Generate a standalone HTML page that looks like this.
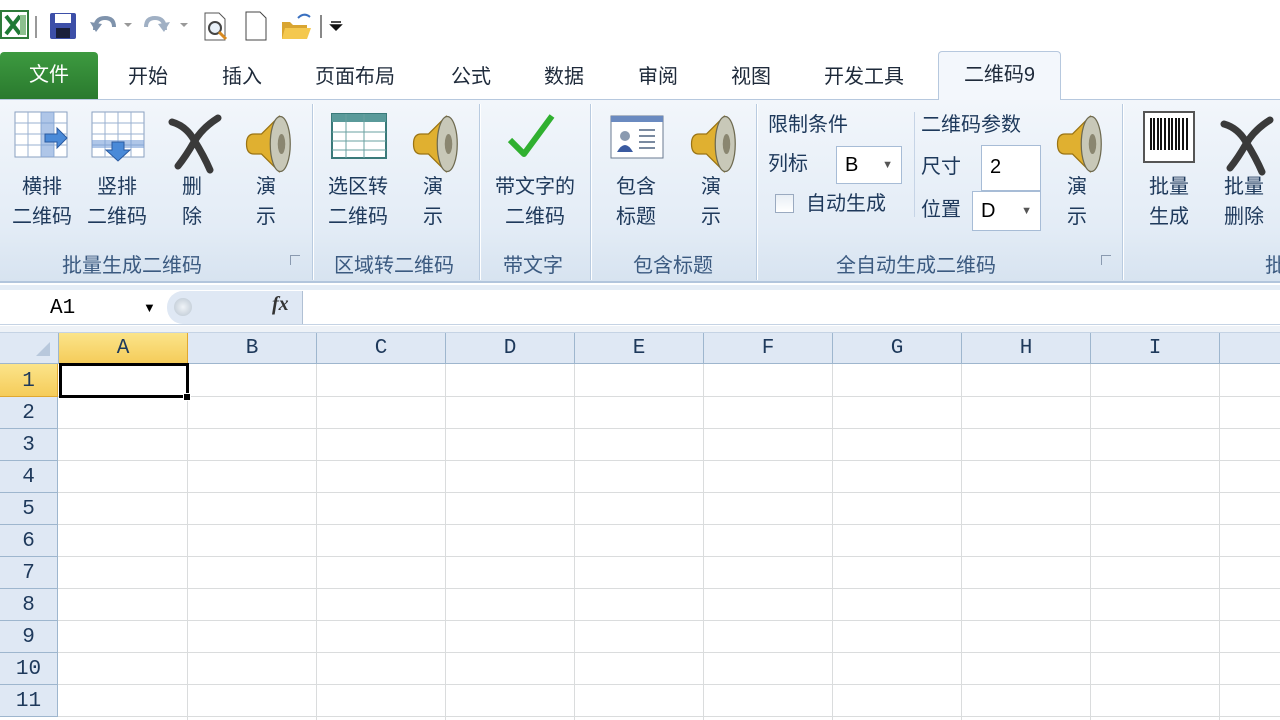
<!DOCTYPE html>
<html><head><meta charset="utf-8"><style>
*{margin:0;padding:0;box-sizing:border-box}
body{width:1280px;height:720px;overflow:hidden;background:#fff;position:relative;font-family:"Liberation Sans","Noto Sans CJK SC",sans-serif;color:#1e395b}
.a{position:absolute}
.tab{position:absolute;top:60px;font-size:20px;color:#1e2a3a}
.lbl{position:absolute;font-size:20px;color:#1e395b;text-align:center;line-height:30px;white-space:nowrap}
.gl{position:absolute;top:249px;font-size:20px;color:#3b5a80;white-space:nowrap}
.sep{position:absolute;top:104px;width:2px;height:176px;background:linear-gradient(#f6f9fd,#c6d4e6,#f6f9fd);border-left:1px solid #b9cbe0;border-right:1px solid #fff}
.ch{position:absolute;top:333px;height:31px;background:#dfe8f4;border-right:1px solid #9eb6ce;border-bottom:1px solid #9eb6ce;font-family:"Liberation Mono",monospace;font-size:21px;text-align:center;line-height:32px;color:#1e395b}
.rh{position:absolute;left:0;width:58px;background:#dfe8f4;border-bottom:1px solid #9eb6ce;border-right:1px solid #9eb6ce;font-family:"Liberation Mono",monospace;font-size:21px;text-align:center;color:#1e395b;padding-top:2px}
.vl{position:absolute;top:364px;width:1px;height:356px;background:#dadcdd}
.hl{position:absolute;left:58px;width:1222px;height:1px;background:#dadcdd}
.box{position:absolute;background:#fff;border:1px solid #a7bcd6;font-size:20px;color:#000;padding-left:8px}
</style></head><body>
<svg class="a" style="left:0;top:8px" width="350" height="36">
<rect x="1" y="3" width="27" height="27" fill="#fff" stroke="#2f7a3a" stroke-width="2"/><path d="M6 8 L20 26 M20 8 L6 26" stroke="#1f7a35" stroke-width="4"/><rect x="20" y="7" width="6" height="20" fill="#8cc08e"/>
<rect x="35" y="8" width="2" height="22" fill="#999"/>
<rect x="50" y="5" width="26" height="26" fill="#3d4fa8" rx="2"/><rect x="55" y="6" width="16" height="9" fill="#fff"/><rect x="56" y="20" width="14" height="10" fill="#1a1f3a"/>
<path d="M95 22 q0 -12 10 -12 q9 0 9 9" stroke="#7f93ac" stroke-width="4" fill="none"/><path d="M90 14 l6 10 l6-8z" fill="#7f93ac"/>
<path d="M124 15 l8 0 l-4 4z" fill="#999"/>
<path d="M165 22 q0 -12 -10 -12 q-9 0 -9 9" stroke="#a0b0c4" stroke-width="4" fill="none"/><path d="M170 14 l-6 10 l-6-8z" fill="#a0b0c4"/>
<path d="M180 15 l8 0 l-4 4z" fill="#999"/>
<path d="M205 5 h14 l6 6 v21 h-20z" fill="#fff" stroke="#555"/><circle cx="215" cy="20" r="6" fill="#e8f0f8" stroke="#444" stroke-width="2"/><path d="M219 24 l7 7" stroke="#d88a20" stroke-width="3"/>
<path d="M246 4 h14 l6 6 v22 h-20z" fill="#fff" stroke="#444"/>
<path d="M282 14 h8 l3 3 h14 v14 h-25z" fill="#d9a531"/><path d="M285 20 h26 l-4 11 h-25z" fill="#f4c84e"/><path d="M298 10 q6 -6 12 -1" stroke="#3a70c0" stroke-width="2" fill="none"/>
<rect x="320" y="7" width="2" height="23" fill="#888"/>
<path d="M331 14 h10 M331 17 h10 l-5 5z" stroke="#111" stroke-width="1.5" fill="#111"/>
</svg>
<div class="a" style="left:0;top:52px;width:98px;height:47px;background:linear-gradient(#3d9a40,#2a7a2e);border-radius:4px 4px 0 0;color:#fff;font-size:20px;text-align:center;line-height:46px">文件</div>
<div class="tab" style="left:128px">开始</div>
<div class="tab" style="left:222px">插入</div>
<div class="tab" style="left:315px">页面布局</div>
<div class="tab" style="left:451px">公式</div>
<div class="tab" style="left:544px">数据</div>
<div class="tab" style="left:638px">审阅</div>
<div class="tab" style="left:731px">视图</div>
<div class="tab" style="left:824px">开发工具</div>
<div class="a" style="left:0;top:99px;width:1280px;height:1px;background:#b6c8de"></div>
<div class="a" style="left:938px;top:51px;width:123px;height:50px;background:#f3f7fc;border:1px solid #b6c8de;border-bottom:none;border-radius:4px 4px 0 0;font-size:20px;text-align:center;line-height:46px;color:#1e2a3a">二维码9</div>
<div class="a" style="left:0;top:100px;width:1280px;height:183px;background:linear-gradient(#f2f6fb,#e3ecf6 70%,#d7e3f0);border-bottom:2px solid #b2c5dc"></div>
<div class="a" style="left:0;top:285px;width:1280px;height:5px;background:#e5edf6"></div>
<div class="sep" style="left:312px"></div><div class="sep" style="left:479px"></div><div class="sep" style="left:590px"></div><div class="sep" style="left:756px"></div><div class="sep" style="left:1122px"></div>
<div class="a" style="left:914px;top:112px;width:1px;height:105px;background:#c6d4e6"></div>
<svg class="a" style="left:0;top:100px" width="1280" height="80">
<defs>
<g id="spk"><path d="M0 20 q-6 0 -6 8 q0 8 6 8 l6 0 l14 14 v-44 l-14 14z" fill="#e0b030" stroke="#9a7414"/><ellipse cx="21" cy="28" rx="8" ry="22" fill="#c8c8b8" stroke="#6e6a50"/><ellipse cx="22" cy="28" rx="3" ry="8" fill="#8a8670"/></g>
<g id="x"><path d="M4 10 q14 4 22 18 q10 16 16 30 M50 6 q-16 10 -24 24 q-8 14 -16 24" stroke="#3a3a3a" stroke-width="7" fill="none" stroke-linecap="round"/></g>
</defs>
<g transform="translate(15,12)"><rect width="52" height="45" fill="#fff" stroke="#8aa0c0"/><path d="M0 11h52M0 22h52M0 33h52M13 0v45M26 0v45M39 0v45" stroke="#9ab0d0"/><rect x="26" y="0" width="13" height="45" fill="#7aa0d8" opacity=".6"/><path d="M30 22 h12 v-6 l10 10 l-10 10 v-6 h-12z" fill="#4a8ad8" stroke="#2a5aa0"/></g>
<g transform="translate(92,12)"><rect width="52" height="45" fill="#fff" stroke="#8aa0c0"/><path d="M0 11h52M0 22h52M0 33h52M13 0v45M26 0v45M39 0v45" stroke="#9ab0d0"/><rect y="28" width="52" height="8" fill="#7aa0d8" opacity=".6"/><path d="M20 30 v8 h-6 l12 11 l12-11 h-6 v-8z" fill="#4a8ad8" stroke="#2a5aa0"/></g>
<g transform="translate(168,12)"><use href="#x"/></g>
<g transform="translate(254,9) scale(1.25)"><use href="#spk"/></g>
<g transform="translate(332,14)"><rect width="54" height="44" fill="#fff" stroke="#3a7a7a" stroke-width="2"/><rect width="54" height="8" fill="#5a9a9a"/><path d="M0 18h54M0 27h54M0 36h54M14 0v44M32 0v44" stroke="#6aa0a0"/></g>
<g transform="translate(421,9) scale(1.25)"><use href="#spk"/></g>
<path d="M510 40 l14 14 l28 -38" stroke="#30b030" stroke-width="6" fill="none" stroke-linejoin="round"/>
<g transform="translate(611,16)"><rect width="52" height="42" fill="#fff" stroke="#6a7a90"/><rect width="52" height="6" fill="#6a8ac0"/><circle cx="14" cy="20" r="5" fill="#8a9ab0"/><path d="M6 36 q8 -14 16 0z" fill="#3a5aa0"/><path d="M28 14h16M28 20h16M28 26h16M28 32h16" stroke="#7a8aa0" stroke-width="2"/></g>
<g transform="translate(699,9) scale(1.25)"><use href="#spk"/></g>
<g transform="translate(1065,9) scale(1.25)"><use href="#spk"/></g>
<g transform="translate(1144,12)"><rect width="50" height="50" fill="#fff" stroke="#555" stroke-width="2"/><path d="M7 6v32M10 6v32M14 6v32M17 6v32M21 6v32M25 6v32M28 6v32M32 6v32M35 6v32M39 6v32M43 6v32" stroke="#111" stroke-width="2"/></g>
<g transform="translate(1220,14)"><use href="#x"/></g>
</svg>
<div class="lbl" style="left:10px;top:172px;width:64px">横排<br>二维码</div>
<div class="lbl" style="left:84px;top:172px;width:66px">竖排<br>二维码</div>
<div class="lbl" style="left:176px;top:172px;width:32px">删<br>除</div>
<div class="lbl" style="left:250px;top:172px;width:32px">演<br>示</div>
<div class="lbl" style="left:324px;top:172px;width:68px">选区转<br>二维码</div>
<div class="lbl" style="left:417px;top:172px;width:32px">演<br>示</div>
<div class="lbl" style="left:490px;top:172px;width:90px">带文字的<br>二维码</div>
<div class="lbl" style="left:612px;top:172px;width:48px">包含<br>标题</div>
<div class="lbl" style="left:695px;top:172px;width:32px">演<br>示</div>
<div class="lbl" style="left:1061px;top:172px;width:32px">演<br>示</div>
<div class="lbl" style="left:1145px;top:172px;width:48px">批量<br>生成</div>
<div class="lbl" style="left:1220px;top:172px;width:48px">批量<br>删除</div>
<div class="lbl" style="left:768px;top:110px">限制条件</div>
<div class="lbl" style="left:921px;top:110px">二维码参数</div>
<div class="lbl" style="left:768px;top:149px">列标</div>
<div class="box" style="left:836px;top:146px;width:66px;height:38px;line-height:36px">B<span style="position:absolute;right:8px;font-size:11px;color:#555">▼</span></div>
<div class="a" style="left:775px;top:194px;width:19px;height:19px;border:1px solid #9aaac0;background:linear-gradient(#e8eef5,#fff)"></div>
<div class="lbl" style="left:806px;top:189px">自动生成</div>
<div class="lbl" style="left:921px;top:152px">尺寸</div>
<div class="box" style="left:981px;top:145px;width:60px;height:46px;line-height:42px">2</div>
<div class="lbl" style="left:921px;top:195px">位置</div>
<div class="box" style="left:972px;top:191px;width:69px;height:40px;line-height:38px">D<span style="position:absolute;right:8px;font-size:11px;color:#555">▼</span></div>
<div class="gl" style="left:62px">批量生成二维码</div>
<div class="gl" style="left:334px">区域转二维码</div>
<div class="gl" style="left:503px">带文字</div>
<div class="gl" style="left:633px">包含标题</div>
<div class="gl" style="left:836px">全自动生成二维码</div>
<div class="gl" style="left:1265px">批</div>
<div class="a" style="left:290px;top:255px;width:10px;height:10px;border-left:1px solid #8a9ab0;border-top:1px solid #8a9ab0"></div>
<div class="a" style="left:1101px;top:255px;width:10px;height:10px;border-left:1px solid #8a9ab0;border-top:1px solid #8a9ab0"></div>
<div class="a" style="left:0;top:290px;width:1280px;height:35px;background:#fff;border-bottom:1px solid #c5d3e4"></div>
<div class="a" style="left:50px;top:297px;font-family:'Liberation Mono',monospace;font-size:21px;color:#000">A1</div>
<div class="a" style="left:143px;top:300px;font-size:13px;color:#000">▼</div>
<div class="a" style="left:167px;top:291px;width:136px;height:33px;background:#dfe8f4;border-radius:16px 0 0 16px;border-right:1px solid #b0c0d4"></div>
<div class="a" style="left:174px;top:298px;width:18px;height:18px;border-radius:50%;background:radial-gradient(#f0f4f8,#b8c4d0)"></div>
<div class="a" style="left:272px;top:293px;font-family:'Liberation Serif',serif;font-style:italic;font-weight:bold;font-size:20px;color:#333">fx</div>
<div class="a" style="left:0;top:326px;width:1280px;height:7px;background:#eef2f7;border-bottom:1px solid #c5d3e4"></div>
<div class="a" style="left:0;top:333px;width:59px;height:31px;background:#dfe8f4;border-right:1px solid #9eb6ce;border-bottom:1px solid #9eb6ce"></div>
<svg class="a" style="left:34px;top:340px" width="18" height="18"><path d="M16 2 V16 H2z" fill="#b8c8dc"/></svg>
<div class="ch" style="left:59px;width:129px;background:linear-gradient(#fbe48a,#f5cc5a);border-color:#e0a830;color:#1e395b">A</div>
<div class="ch" style="left:188px;width:129px">B</div>
<div class="ch" style="left:317px;width:129px">C</div>
<div class="ch" style="left:446px;width:129px">D</div>
<div class="ch" style="left:575px;width:129px">E</div>
<div class="ch" style="left:704px;width:129px">F</div>
<div class="ch" style="left:833px;width:129px">G</div>
<div class="ch" style="left:962px;width:129px">H</div>
<div class="ch" style="left:1091px;width:129px">I</div>
<div class="ch" style="left:1220px;width:60px;border-right:none"></div>
<div class="vl" style="left:187px"></div><div class="vl" style="left:316px"></div><div class="vl" style="left:445px"></div><div class="vl" style="left:574px"></div><div class="vl" style="left:703px"></div><div class="vl" style="left:832px"></div><div class="vl" style="left:961px"></div><div class="vl" style="left:1090px"></div><div class="vl" style="left:1219px"></div>
<div class="hl" style="top:396px"></div><div class="hl" style="top:428px"></div><div class="hl" style="top:460px"></div><div class="hl" style="top:492px"></div><div class="hl" style="top:524px"></div><div class="hl" style="top:556px"></div><div class="hl" style="top:588px"></div><div class="hl" style="top:620px"></div><div class="hl" style="top:652px"></div><div class="hl" style="top:684px"></div><div class="hl" style="top:716px"></div>
<div class="rh" style="top:364px;height:33px;line-height:31px;background:linear-gradient(#fbe48a,#f5cc5a);border-color:#e0a830">1</div>
<div class="rh" style="top:397px;height:32px;line-height:30px">2</div>
<div class="rh" style="top:429px;height:32px;line-height:30px">3</div>
<div class="rh" style="top:461px;height:32px;line-height:30px">4</div>
<div class="rh" style="top:493px;height:32px;line-height:30px">5</div>
<div class="rh" style="top:525px;height:32px;line-height:30px">6</div>
<div class="rh" style="top:557px;height:32px;line-height:30px">7</div>
<div class="rh" style="top:589px;height:32px;line-height:30px">8</div>
<div class="rh" style="top:621px;height:32px;line-height:30px">9</div>
<div class="rh" style="top:653px;height:32px;line-height:30px">10</div>
<div class="rh" style="top:685px;height:32px;line-height:30px">11</div>
<div class="a" style="left:59px;top:363px;width:130px;height:35px;border:3px solid #000"></div>
<div class="a" style="left:183px;top:393px;width:8px;height:8px;background:#000;border:1px solid #fff"></div>
</body></html>
